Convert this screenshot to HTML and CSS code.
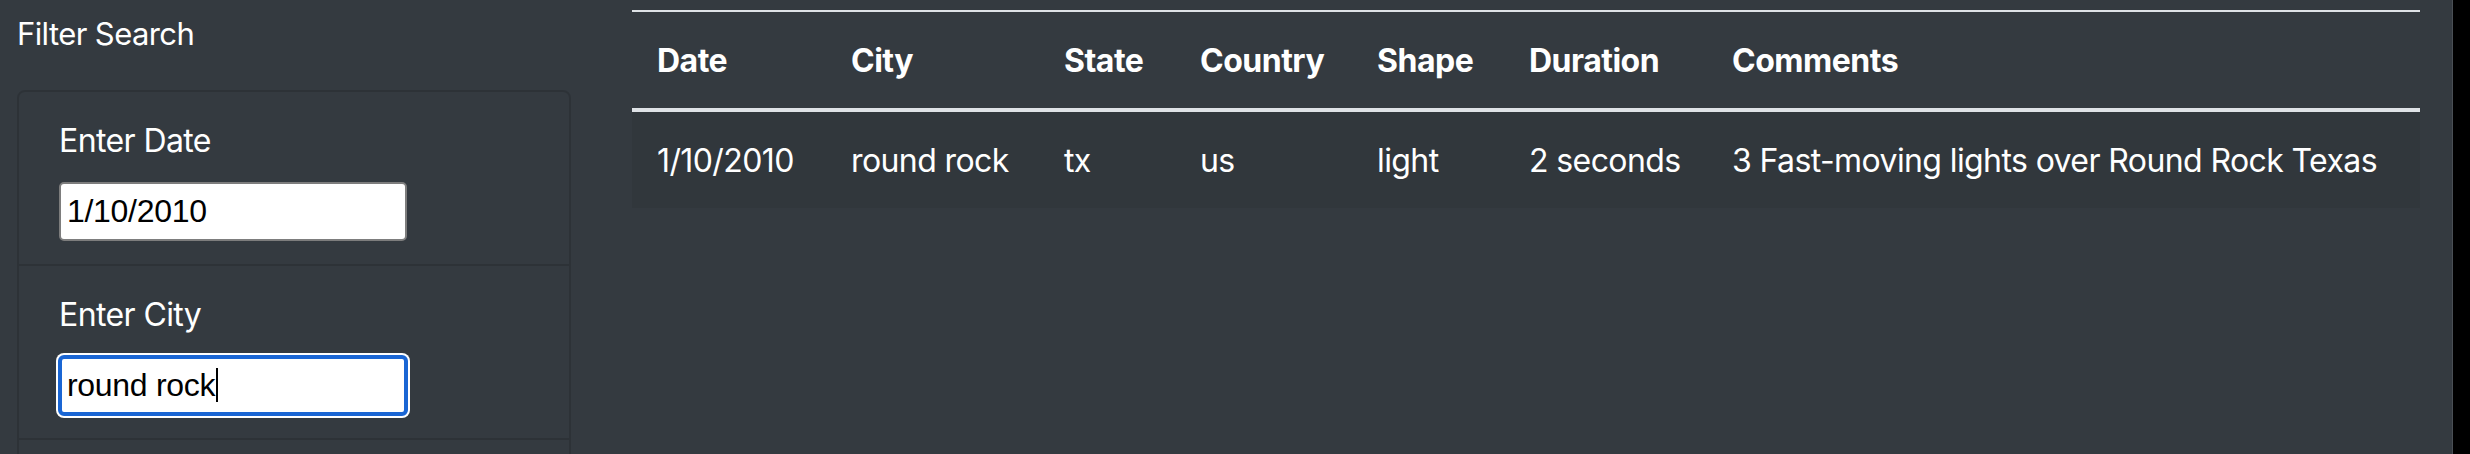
FILE: index.html
```html
<!DOCTYPE html>
<html lang="en">
<head>
<meta charset="utf-8">
<title>UFO Sightings</title>
<link rel="stylesheet" href="styles.css">
</head>
<body>
<div class="page">
  <div class="main">
    <aside class="sidebar">
      <h5 class="sidebar-title">Filter Search</h5>
      <div class="card">
        <ul class="filters">
          <li class="filter">
            <label class="filter-label">Enter Date</label>
            <div class="field" role="textbox">1/10/2010</div>
          </li>
          <li class="filter">
            <label class="filter-label">Enter City</label>
            <div class="field focused" role="textbox">round rock<span class="caret"></span></div>
          </li>
          <li class="filter filter-empty"></li>
        </ul>
      </div>
    </aside>
    <section class="results">
      <table class="ufo-table">
        <colgroup>
          <col class="c-date"><col class="c-city"><col class="c-state"><col class="c-country"><col class="c-shape"><col class="c-duration"><col class="c-comments">
        </colgroup>
        <thead>
          <tr>
            <th>Date</th><th>City</th><th>State</th><th>Country</th><th>Shape</th><th>Duration</th><th>Comments</th>
          </tr>
        </thead>
        <tbody>
          <tr>
            <td>1/10/2010</td><td>round rock</td><td>tx</td><td>us</td><td>light</td><td>2 seconds</td><td>3 Fast-moving lights over Round Rock Texas</td>
          </tr>
        </tbody>
      </table>
    </section>
  </div>
  <div class="edge"></div>
</div>
</body>
</html>
```
FILE: styles.css
```css
html, body {
  margin: 0;
  padding: 0;
  height: 100%;
  overflow: hidden;
}

body {
  background: #343a40;
  color: #ffffff;
  font-family: Inter, "Noto Sans", sans-serif;
  font-size: 32px;
  line-height: 48px;
  letter-spacing: -0.6px;
}

.page {
  display: flex;
  height: 454px;
  overflow: hidden;
}

.main {
  flex: 1;
  display: grid;
  grid-template-columns: 554px 1788px;
  column-gap: 61px;
  align-items: start;
  padding: 10px 0 0 17px;
}

.edge {
  width: 18px;
  background: #000000;
  border-left: 1px solid #4a4f55;
  box-sizing: border-box;
}

.sidebar-title {
  margin: 0 0 32px;
  font-size: 31px;
  font-weight: 400;
  line-height: 48px;
}

.card {
  border: 2px solid rgba(0, 0, 0, 0.13);
  border-radius: 8px;
  overflow: hidden;
}

.filters {
  list-style: none;
  margin: 0;
  padding: 0;
}

.filter {
  padding: 25px 40px 23px;
  border-bottom: 2px solid rgba(0, 0, 0, 0.13);
}

.filter-empty {
  height: 124px;
}

.filter-label {
  display: block;
  margin-bottom: 17px;
}

.field {
  box-sizing: border-box;
  width: 348px;
  height: 59px;
  padding: 0 6px;
  background: #ffffff;
  border: 2px solid #7d7d7d;
  border-radius: 5px;
  color: #000000;
  font-family: "Liberation Sans", Arial, sans-serif;
  font-size: 32px;
  letter-spacing: -0.3px;
  line-height: 55px;
  white-space: nowrap;
}

.field.focused {
  border: 3px solid #1a66d4;
  outline: 2px solid #1a66d4;
  outline-offset: -1px;
  box-shadow: 0 0 0 3px #ffffff;
  padding-left: 5px;
  line-height: 53px;
}

.caret {
  display: inline-block;
  width: 2px;
  height: 34px;
  margin-left: 1px;
  background: #000000;
  vertical-align: middle;
  position: relative;
  top: -3px;
}

.ufo-table {
  width: 1788px;
  table-layout: fixed;
  border-collapse: collapse;
}

.c-date { width: 194px; }
.c-city { width: 213px; }
.c-state { width: 136px; }
.c-country { width: 177px; }
.c-shape { width: 152px; }
.c-duration { width: 203px; }
.c-comments { width: 713px; }

.ufo-table th,
.ufo-table td {
  padding: 25px 24px 23px 25px;
  text-align: left;
  vertical-align: top;
  white-space: nowrap;
}

.ufo-table th {
  font-weight: 700;
  letter-spacing: -0.5px;
  border-top: 2px solid #dee2e6;
  border-bottom: 4px solid #dee2e6;
}

.ufo-table tbody tr {
  background: rgba(0, 0, 0, 0.05);
}
```
